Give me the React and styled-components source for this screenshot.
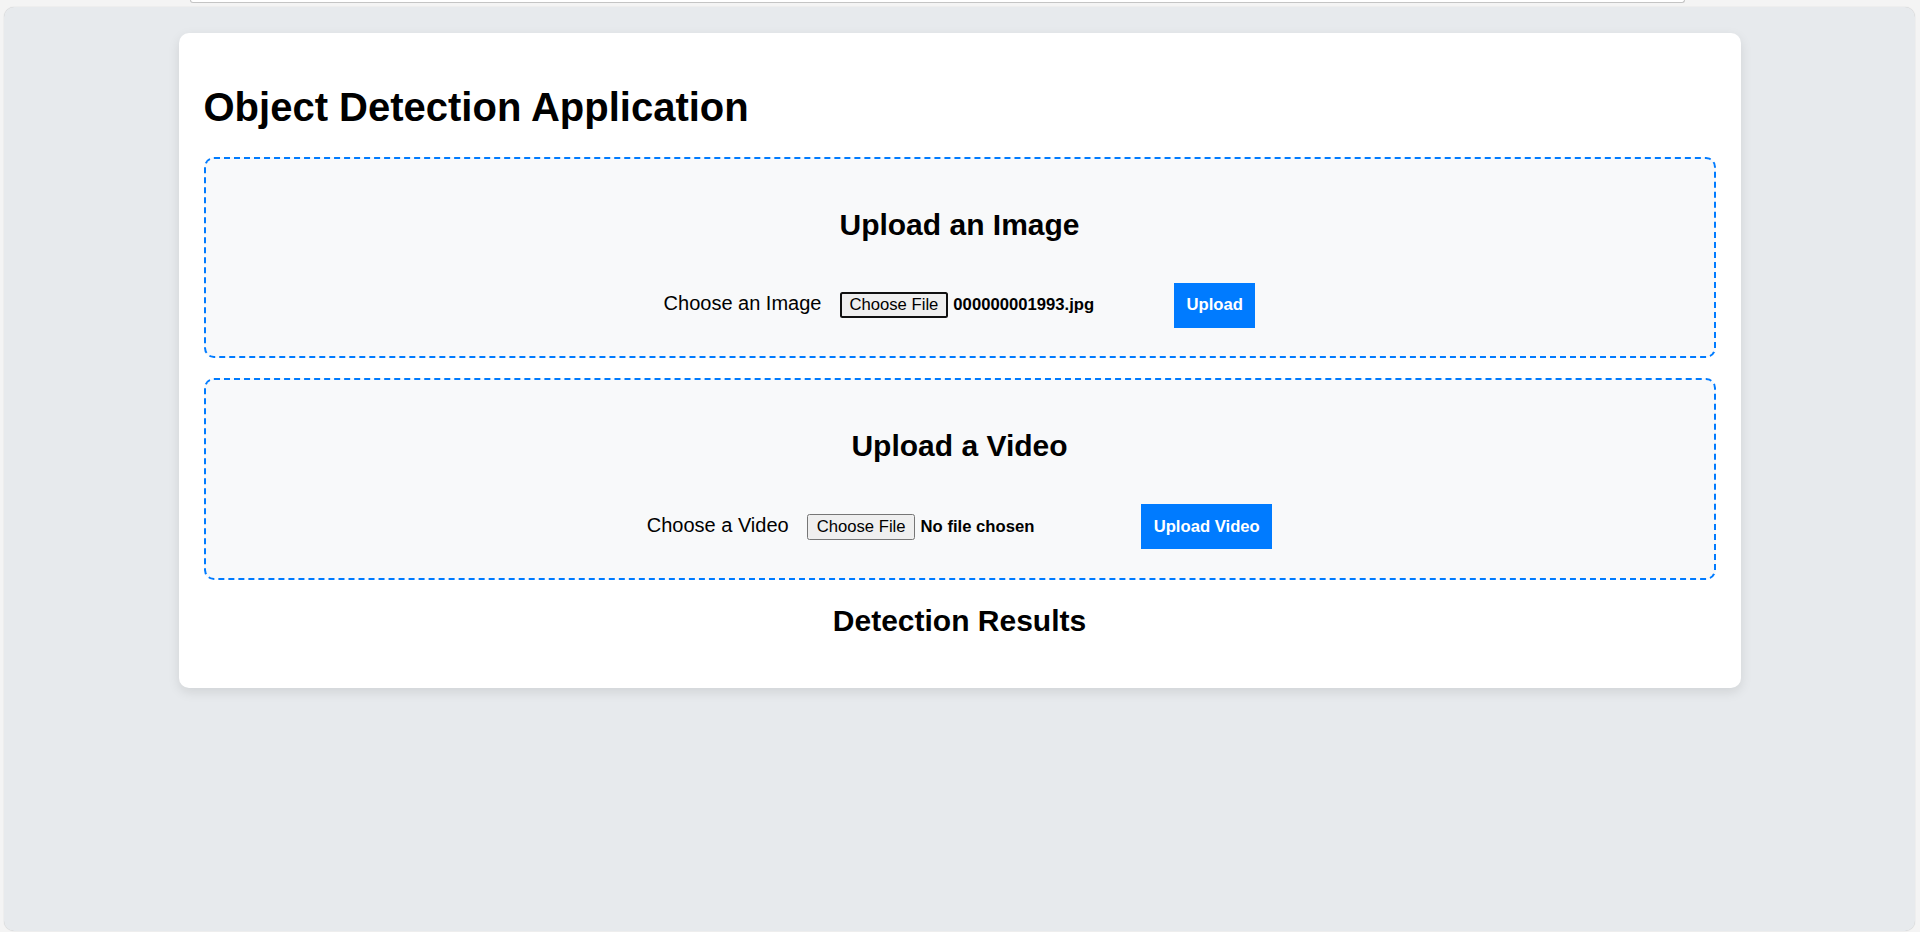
import React from 'react';
import styled, { createGlobalStyle } from 'styled-components';

const GlobalStyle = createGlobalStyle`
  html, body {
    margin: 0;
    padding: 0;
    background: #f4f4f4;
    font-family: "Liberation Sans", Arial, sans-serif;
  }

  * {
    box-sizing: border-box;
  }
`;

const Page = styled.div`
  height: 932px;
  overflow: hidden;
  display: flex;
  flex-direction: column;
`;

const TopStrip = styled.div`
  margin-left: 190px;
  width: 1495px;
  height: 3px;
  background: #fff;
  border: 1px solid #c4c4c4;
  border-top: none;
  border-radius: 0 0 6px 6px;
`;

const Panel = styled.div`
  flex: 1;
  margin: 4px 5px 1px 4px;
  padding-top: 26px;
  background: #e7eaed;
  border-radius: 10px;
  box-shadow: 0 0 1px rgba(0, 0, 0, 0.25);
`;

const Card = styled.div`
  width: 1562px;
  margin: 0 auto;
  padding: 25px;
  background: #fff;
  border-radius: 10px;
  box-shadow: 0 4px 12px rgba(0, 0, 0, 0.1);
`;

const Title = styled.h1`
  margin: 26.8px 0;
  font-size: 40px;
  font-weight: bold;
  color: #000;
`;

const UploadSection = styled.section`
  margin-bottom: 20px;
  padding: 25px;
  border: 2px dashed #007bff;
  border-radius: 10px;
  background: #f8f9fa;
  text-align: center;
`;

const SectionTitle = styled.h2`
  margin: ${(p) => (p.$inSection ? '24px 0 41px' : '24.9px 0')};
  font-size: 30px;
  font-weight: bold;
  color: #000;
  text-align: center;
`;

const UploadRow = styled.form`
  display: flex;
  justify-content: center;
  align-items: baseline;
  gap: 18.5px;
  margin: 0 0 3.5px;
`;

const FieldLabel = styled.label`
  font-size: 20px;
  color: #000;
`;

const FilePicker = styled.div`
  display: flex;
  align-items: baseline;
  gap: 5.5px;
  width: 315.5px;
`;

const FileButton = styled.button`
  height: 26px;
  padding: ${(p) => (p.$focused ? '0 7.5px' : '0 8.5px')};
  font-family: "Liberation Sans", Arial, sans-serif;
  font-size: 16.67px;
  color: #000;
  background: #efefef;
  border: ${(p) => (p.$focused ? '2px solid #101010' : '1px solid #767676')};
  border-radius: 2.5px;
`;

const FileName = styled.span`
  font-size: 16.67px;
  font-weight: bold;
  color: #000;
`;

const SubmitButton = styled.button`
  padding: 12.5px;
  font-family: "Liberation Sans", Arial, sans-serif;
  font-size: 16.67px;
  font-weight: bold;
  color: #fff;
  background: #007bff;
  border: none;
  border-radius: 0;
`;

const uploads = [
  { title: 'Upload an Image', label: 'Choose an Image', file: '000000001993.jpg', action: 'Upload', focused: true },
  { title: 'Upload a Video', label: 'Choose a Video', file: 'No file chosen', action: 'Upload Video', focused: false },
];

export default function App() {
  return (
    <>
      <GlobalStyle />
      <Page>
        <TopStrip />
        <Panel>
          <Card>
            <Title>Object Detection Application</Title>
            {uploads.map((u) => (
              <UploadSection key={u.title}>
                <SectionTitle $inSection>{u.title}</SectionTitle>
                <UploadRow onSubmit={(e) => e.preventDefault()}>
                  <FieldLabel>{u.label}</FieldLabel>
                  <FilePicker>
                    <FileButton type="button" $focused={u.focused}>Choose File</FileButton>
                    <FileName>{u.file}</FileName>
                  </FilePicker>
                  <SubmitButton type="submit">{u.action}</SubmitButton>
                </UploadRow>
              </UploadSection>
            ))}
            <SectionTitle>Detection Results</SectionTitle>
          </Card>
        </Panel>
      </Page>
    </>
  );
}
